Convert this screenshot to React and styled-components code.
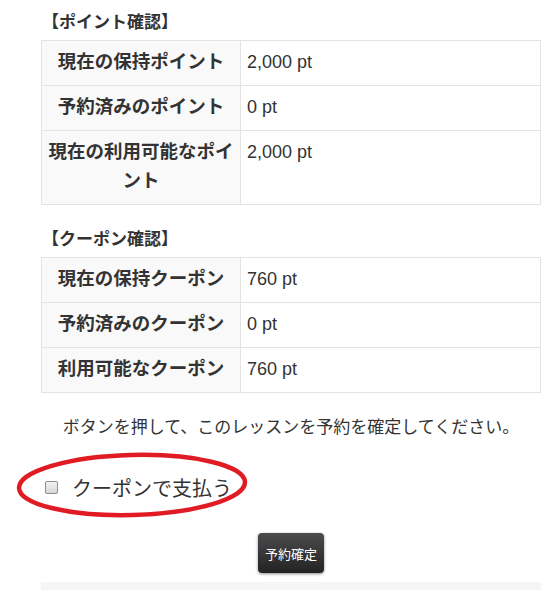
import React, { useState } from "react";
import styled, { createGlobalStyle } from "styled-components";

const GlobalStyle = createGlobalStyle`
  body {
    margin: 0;
    background: #fff;
    color: #333;
    font-family: "Liberation Sans", "Noto Sans CJK JP", sans-serif;
  }
`;

const Wrapper = styled.div`
  width: 500px;
  margin-left: 41px;
  padding-top: 11px;
`;

const Heading = styled.h4`
  margin: 0 0 5px;
  padding-left: 1px;
  font-size: 17px;
  line-height: 24px;
  font-weight: bold;
  color: #333;
`;

const Table = styled.table`
  width: 100%;
  border-collapse: collapse;
  margin-bottom: 23px;
`;

const LabelCell = styled.th`
  width: 186px;
  padding: 6px 6px 9px;
  background: #f9f9f9;
  border: 1px solid #e3e3e3;
  font-size: 18.5px;
  line-height: 29px;
  font-weight: bold;
  text-align: center;
  vertical-align: top;
  color: #333;
`;

const ValueCell = styled.td`
  padding: 7px 6px 8px;
  background: #fff;
  border: 1px solid #e3e3e3;
  font-size: 18px;
  line-height: 29px;
  vertical-align: top;
  color: #333;
`;

const Note = styled.p`
  margin: 0;
  font-size: 17px;
  line-height: 24px;
  text-align: center;
  color: #333;
`;

const CheckRow = styled.label`
  position: relative;
  display: flex;
  align-items: center;
  gap: 14px;
  margin-top: 32px;
  padding-left: 4px;
  height: 30px;
  font-size: 20px;
  color: #333;
  cursor: pointer;
`;

const Check = styled.input`
  appearance: none;
  margin: 0;
  width: 13px;
  height: 13px;
  border: 1px solid #8e8e8e;
  border-radius: 2px;
  background: linear-gradient(#f2f2f2, #d6d6d6);
  &:checked {
    background: linear-gradient(#dfe9f5, #b7cbe3);
  }
`;

const Circle = styled.svg`
  position: absolute;
  left: -26px;
  top: -21px;
  width: 236px;
  height: 71px;
  pointer-events: none;
  overflow: visible;
`;

const ButtonRow = styled.div`
  display: flex;
  justify-content: center;
  margin-top: 31px;
`;

const Button = styled.button`
  width: 66px;
  height: 40px;
  padding: 0;
  border: none;
  border-radius: 4px;
  background: linear-gradient(#4b4b4b, #232323);
  box-shadow: 0 1px 3px rgba(0, 0, 0, 0.45);
  color: #fff;
  font-family: "Noto Sans CJK JP", sans-serif;
  font-size: 13px;
  cursor: pointer;
`;

const Well = styled.div`
  margin-top: 9px;
  height: 20px;
  background: #f5f5f5;
`;

const pointRows = [
  ["現在の保持ポイント", "2,000 pt"],
  ["予約済みのポイント", "0 pt"],
  ["現在の利用可能なポイント", "2,000 pt"],
];

const couponRows = [
  ["現在の保持クーポン", "760 pt"],
  ["予約済みのクーポン", "0 pt"],
  ["利用可能なクーポン", "760 pt"],
];

const InfoTable = ({ rows }) => (
  <Table>
    <tbody>
      {rows.map(([label, value]) => (
        <tr key={label}>
          <LabelCell>{label}</LabelCell>
          <ValueCell>{value}</ValueCell>
        </tr>
      ))}
    </tbody>
  </Table>
);

const App = () => {
  const [useCoupon, setUseCoupon] = useState(false);

  return (
    <Wrapper>
      <GlobalStyle />
      <Heading>【ポイント確認】</Heading>
      <InfoTable rows={pointRows} />
      <Heading>【クーポン確認】</Heading>
      <InfoTable rows={couponRows} />
      <Note>ボタンを押して、このレッスンを予約を確定してください。</Note>
      <CheckRow>
        <Check
          type="checkbox"
          checked={useCoupon}
          onChange={(ev) => setUseCoupon(ev.target.checked)}
        />
        <span>クーポンで支払う</span>
        <Circle viewBox="0 0 236 71">
          <ellipse
            cx="117"
            cy="34"
            rx="113"
            ry="30"
            fill="none"
            stroke="#e01b24"
            strokeWidth="4.5"
            transform="rotate(-1.5 117 34)"
          />
        </Circle>
      </CheckRow>
      <ButtonRow>
        <Button type="button">予約確定</Button>
      </ButtonRow>
      <Well />
    </Wrapper>
  );
};

export default App;
